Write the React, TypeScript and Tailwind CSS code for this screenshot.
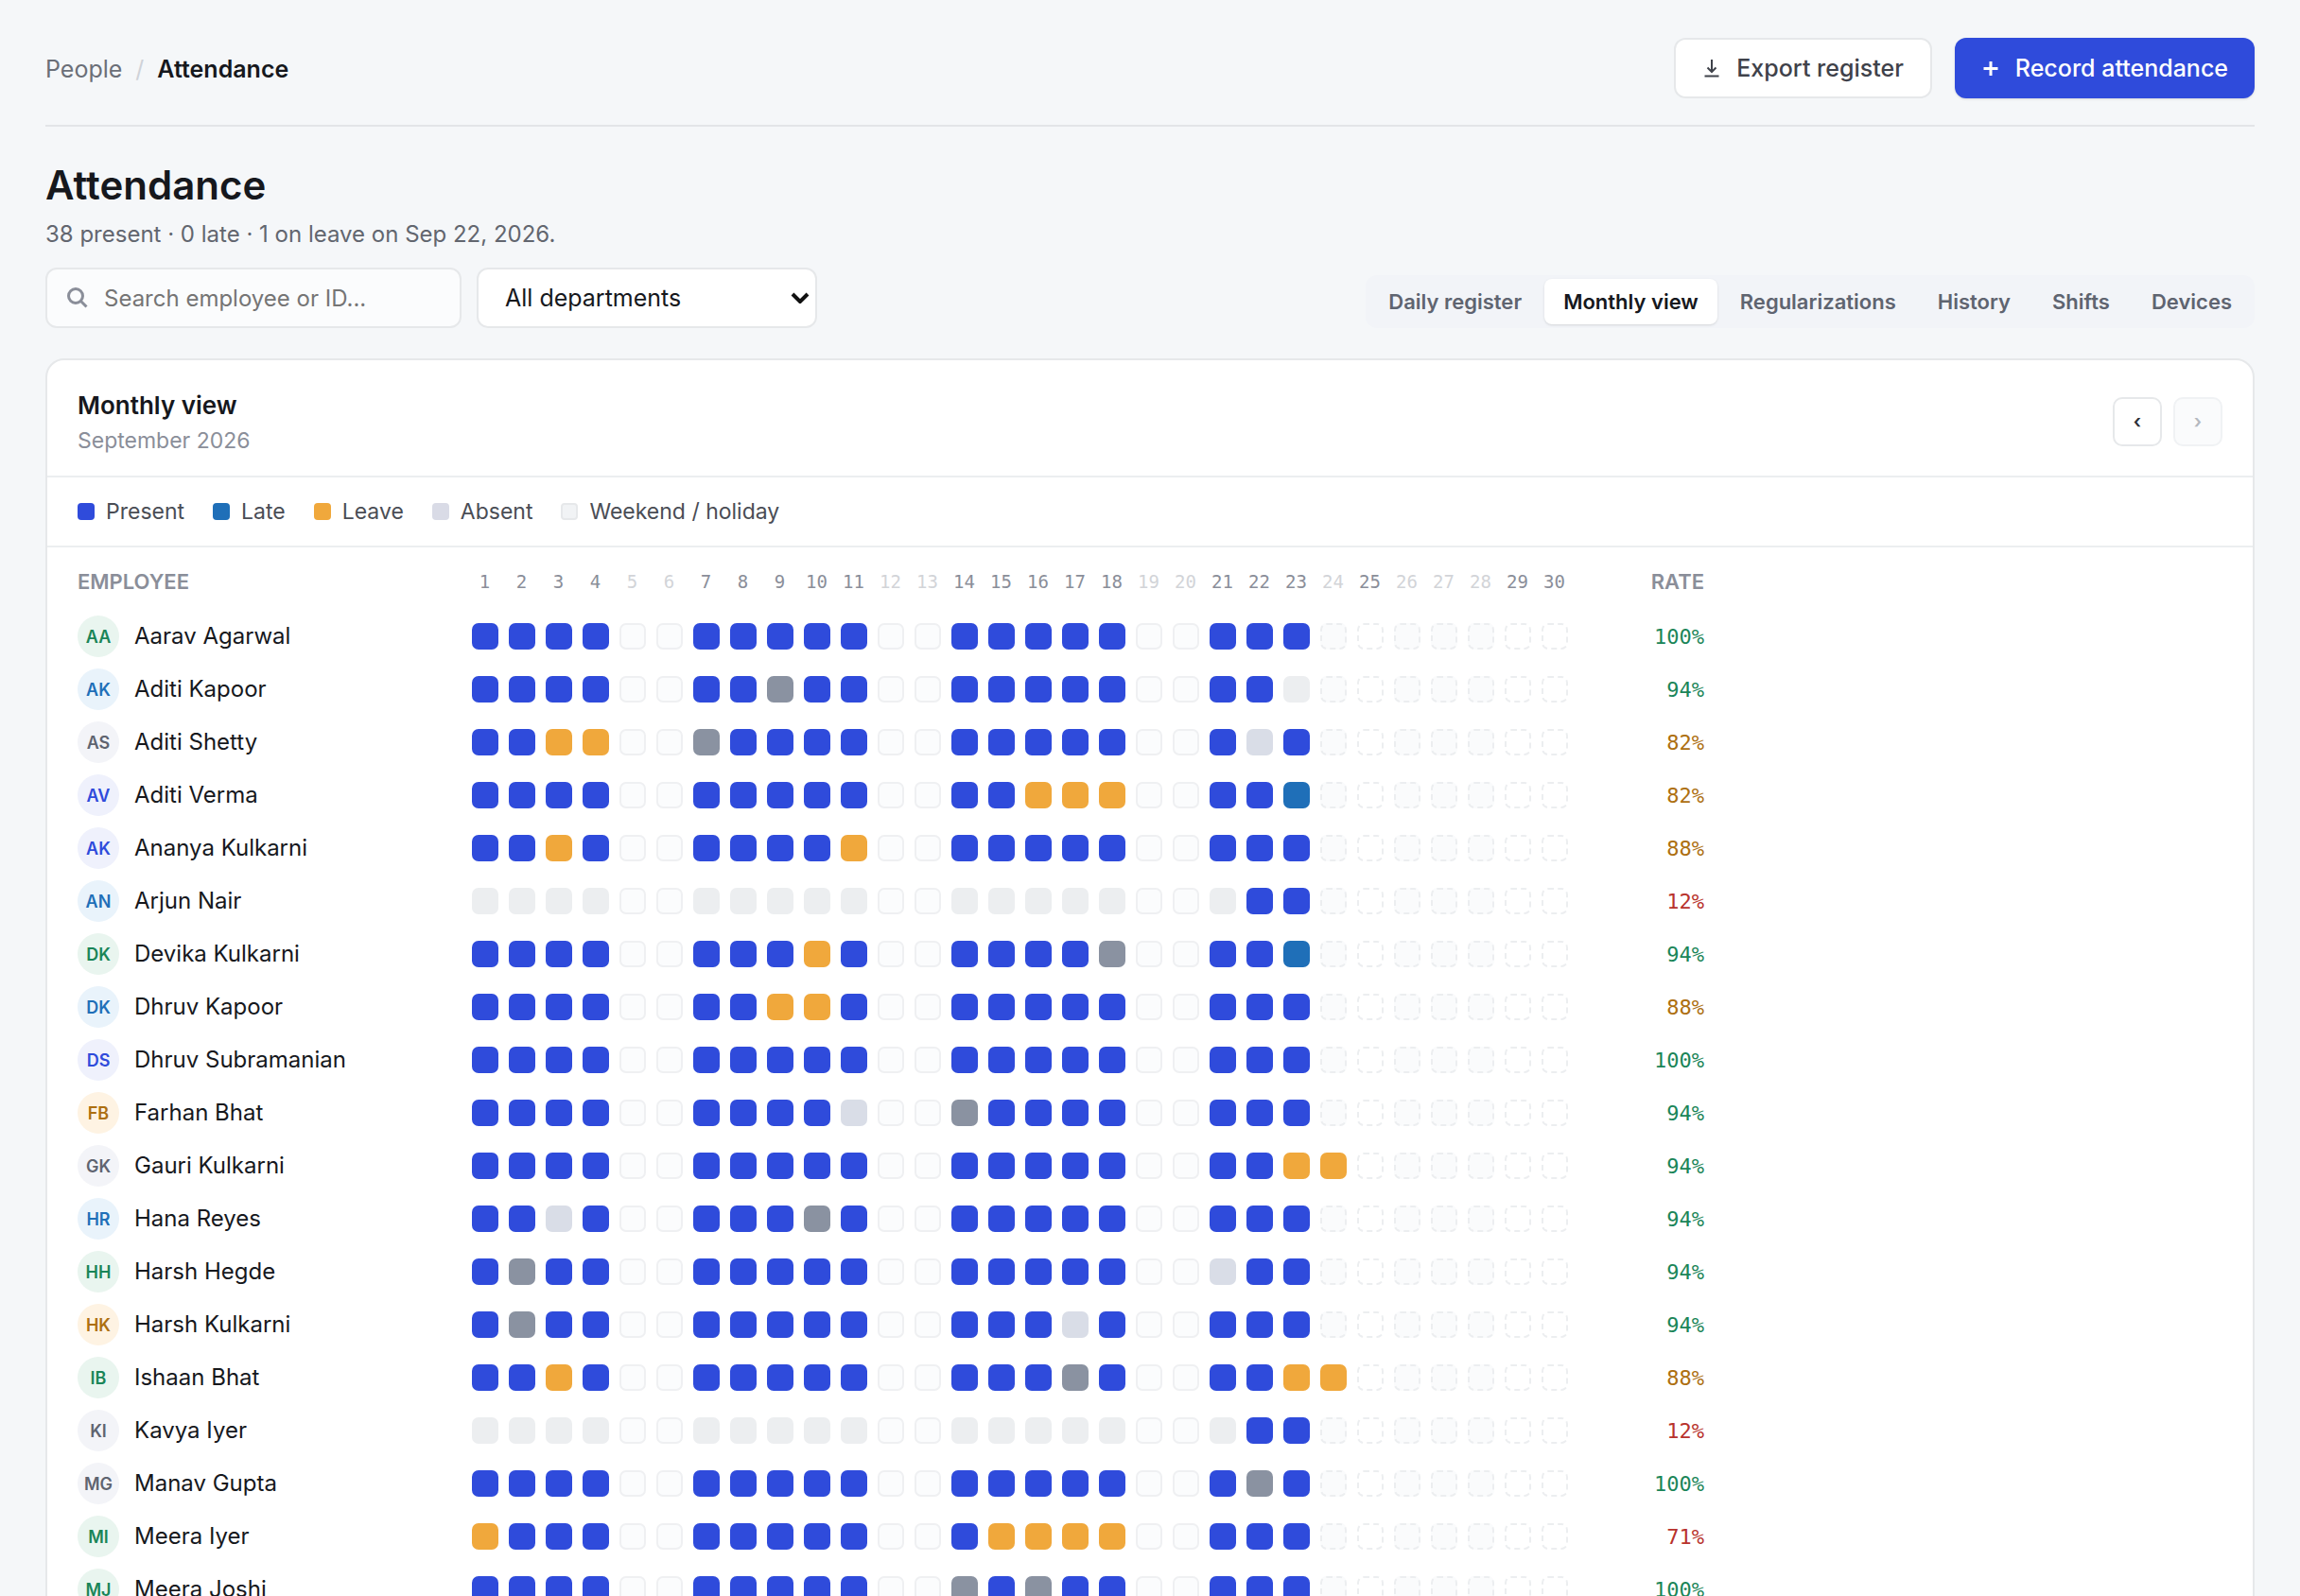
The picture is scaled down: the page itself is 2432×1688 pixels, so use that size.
// Attendance: monthly register for a single month, one row per employee
// and one square per day. Everything is drawn from the EMPLOYEES list below.

import type { ReactNode } from 'react';

type Status = 'present' | 'late' | 'leave' | 'absent' | 'unmarked' | 'none';
type Tone = 'green' | 'sky' | 'indigo' | 'amber' | 'gray';

interface Employee {
  name: string;
  tone: Tone;
  rate: number;
  /** First working day that counts; earlier working days are left blank. */
  from?: number;
  /** Days that differ from the default of "present". */
  days?: Record<number, Status>;
}

const TODAY = 23;
const DAYS = Array.from({ length: 30 }, (_, i) => i + 1);
const OFF_DAYS = [5, 6, 12, 13, 19, 20, 24, 26, 27, 28];

const STATUS_CLASS: Record<Status, string> = {
  present: 'bg-[#2f4bdb]',
  late: 'bg-[#1f6fb8]',
  leave: 'bg-[#f0a83c]',
  absent: 'bg-[#d9dde7]',
  unmarked: 'bg-[#8a92a1]',
  none: 'bg-[#eceef0]',
};

const TONE_CLASS: Record<Tone, string> = {
  green: 'bg-[#e9f5ef] text-[#1a8558]',
  sky: 'bg-[#e9f3fb] text-[#1f6fb8]',
  indigo: 'bg-[#eff1fc] text-[#2f4bdb]',
  amber: 'bg-[#fef3e3] text-[#ad6f10]',
  gray: 'bg-[#f3f4f8] text-[#5f6470]',
};

const EMPLOYEES: Employee[] = [
  { name: 'Aarav Agarwal', tone: 'green', rate: 100 },
  { name: 'Aditi Kapoor', tone: 'sky', rate: 94, days: { 9: 'unmarked', 23: 'none' } },
  { name: 'Aditi Shetty', tone: 'gray', rate: 82, days: { 3: 'leave', 4: 'leave', 7: 'unmarked', 22: 'absent' } },
  { name: 'Aditi Verma', tone: 'indigo', rate: 82, days: { 16: 'leave', 17: 'leave', 18: 'leave', 23: 'late' } },
  { name: 'Ananya Kulkarni', tone: 'indigo', rate: 88, days: { 3: 'leave', 11: 'leave' } },
  { name: 'Arjun Nair', tone: 'sky', rate: 12, from: 22 },
  { name: 'Devika Kulkarni', tone: 'green', rate: 94, days: { 10: 'leave', 18: 'unmarked', 23: 'late' } },
  { name: 'Dhruv Kapoor', tone: 'sky', rate: 88, days: { 9: 'leave', 10: 'leave' } },
  { name: 'Dhruv Subramanian', tone: 'indigo', rate: 100 },
  { name: 'Farhan Bhat', tone: 'amber', rate: 94, days: { 11: 'absent', 14: 'unmarked' } },
  { name: 'Gauri Kulkarni', tone: 'gray', rate: 94, days: { 23: 'leave', 24: 'leave' } },
  { name: 'Hana Reyes', tone: 'sky', rate: 94, days: { 3: 'absent', 10: 'unmarked' } },
  { name: 'Harsh Hegde', tone: 'green', rate: 94, days: { 2: 'unmarked', 21: 'absent' } },
  { name: 'Harsh Kulkarni', tone: 'amber', rate: 94, days: { 2: 'unmarked', 17: 'absent' } },
  { name: 'Ishaan Bhat', tone: 'green', rate: 88, days: { 3: 'leave', 17: 'unmarked', 23: 'leave', 24: 'leave' } },
  { name: 'Kavya Iyer', tone: 'gray', rate: 12, from: 22 },
  { name: 'Manav Gupta', tone: 'gray', rate: 100, days: { 22: 'unmarked' } },
  { name: 'Meera Iyer', tone: 'green', rate: 71, days: { 1: 'leave', 15: 'leave', 16: 'leave', 17: 'leave', 18: 'leave' } },
  { name: 'Meera Joshi', tone: 'green', rate: 100, days: { 14: 'unmarked', 16: 'unmarked' } },
];

const LEGEND = [
  { label: 'Present', swatch: 'bg-[#2f4bdb]' },
  { label: 'Late', swatch: 'bg-[#1f6fb8]' },
  { label: 'Leave', swatch: 'bg-[#f0a83c]' },
  { label: 'Absent', swatch: 'bg-[#d9dbe6]' },
  { label: 'Weekend / holiday', swatch: 'border-2 border-[#e6e8ea] bg-[#f1f3f5]' },
];

const TABS = ['Daily register', 'Monthly view', 'Regularizations', 'History', 'Shifts', 'Devices'];

function cellClass(employee: Employee, day: number): string {
  const marked = employee.days?.[day];
  if (marked) return STATUS_CLASS[marked];
  const off = OFF_DAYS.includes(day);
  if (day > TODAY) {
    return off
      ? 'border-2 border-dashed border-[#eceef0] bg-[#fafbfc]'
      : 'border-2 border-dashed border-[#eceef0]';
  }
  if (off) return 'border-2 border-[#eff0f2] bg-[#fbfcfd]';
  if (employee.from && day < employee.from) return STATUS_CLASS.none;
  return STATUS_CLASS.present;
}

function rateClass(rate: number): string {
  if (rate >= 90) return 'text-[#1a8558]';
  if (rate >= 80) return 'text-[#ad6f10]';
  return 'text-[#b8322c]';
}

function initials(name: string): string {
  return name
    .split(' ')
    .map((part) => part[0])
    .join('');
}

function NavButton({ label, disabled, children }: { label: string; disabled?: boolean; children: ReactNode }) {
  return (
    <button
      type="button"
      aria-label={label}
      disabled={disabled}
      className="flex size-[52px] items-center justify-center rounded-[10px] border-2 border-[#e6e8ea] bg-white text-[20px] font-semibold text-[#2c2f36] disabled:border-[#f0f2f4] disabled:bg-[#fafbfc] disabled:text-[#b4b8bf]"
    >
      {children}
    </button>
  );
}

function TopBar() {
  return (
    <header className="flex items-center justify-between border-b-2 border-[#e3e5e8] pt-10 pb-7">
      <nav aria-label="Breadcrumb" className="flex items-center gap-3.5 pt-0.5 text-[25px] leading-8">
        <a href="#people" className="text-[#6b6f78]">
          People
        </a>
        <span className="text-[#cfd2d8]">/</span>
        <span aria-current="page" className="font-semibold text-[#16181d]">
          Attendance
        </span>
      </nav>
      <div className="flex gap-6">
        <button
          type="button"
          className="flex h-16 items-center gap-4 rounded-xl border-2 border-[#e6e8ea] bg-white px-7 pt-0.5 text-[25px] font-medium text-[#3f424a]"
        >
          <svg viewBox="0 0 20 20" className="size-5" fill="none" stroke="currentColor" strokeWidth="2">
            <path d="M10 0v12.500M5.500 8.500 10 13l4.500-4.500M2.500 17.500h15" />
          </svg>
          Export register
        </button>
        <button
          type="button"
          className="flex h-16 items-center gap-4 rounded-xl bg-[#2f4bdb] px-7 pt-0.5 text-[25px] font-medium text-white shadow-sm"
        >
          <svg viewBox="0 0 20 20" className="size-5" fill="none" stroke="currentColor" strokeWidth="3">
            <path d="M10 2v15M2.500 9.500h15" />
          </svg>
          Record attendance
        </button>
      </div>
    </header>
  );
}

function Toolbar() {
  return (
    <div className="flex items-end justify-between">
      <div className="flex gap-4">
        <label className="flex h-16 w-[440px] items-center gap-4 rounded-xl border-2 border-[#e6e8ea] bg-[#fbfcfd] px-5">
          <svg viewBox="0 0 24 24" className="size-6" fill="none" stroke="#8a8e99" strokeWidth="3">
            <circle cx="10" cy="10" r="7.500" />
            <path d="m15.500 15.500 6 6" />
          </svg>
          <input
            type="search"
            aria-label="Search employees"
            placeholder="Search employee or ID..."
            className="min-w-0 flex-1 bg-transparent pt-0.5 text-[24px] outline-none placeholder:text-[#757575]"
          />
        </label>
        <div className="relative">
          <select
            aria-label="Department"
            className="h-16 w-[360px] appearance-none rounded-xl border-2 border-[#e6e8ea] bg-white px-7 pt-0.5 text-[25px] text-[#16181d]"
          >
            <option>All departments</option>
          </select>
          <svg
            viewBox="0 0 20 12"
            className="pointer-events-none absolute top-[26px] right-2 h-3 w-5"
            fill="none"
            stroke="#111"
            strokeWidth="4"
          >
            <path d="m2 2 8 8 8-8" />
          </svg>
        </div>
      </div>
      <div role="tablist" className="flex gap-1 rounded-xl bg-[#f2f4f8] p-1">
        {TABS.map((tab) => (
          <button
            key={tab}
            type="button"
            role="tab"
            aria-selected={tab === 'Monthly view'}
            className="h-12 rounded-lg px-5 text-[22px] font-semibold text-[#5f6470] aria-selected:bg-white aria-selected:text-[#16181d] aria-selected:shadow-sm"
          >
            {tab}
          </button>
        ))}
      </div>
    </div>
  );
}

function RegisterTable() {
  return (
    <table className="table-fixed border-collapse">
      <colgroup>
        <col className="w-[411px]" />
        {DAYS.map((day) => (
          <col key={day} className="w-[39px]" />
        ))}
        <col className="w-[139px]" />
      </colgroup>
      <thead>
        <tr className="h-[66px]">
          <th scope="col" className="pt-1.5 text-left text-[22px] font-semibold text-[#8a8e99]">
            EMPLOYEE
          </th>
          {DAYS.map((day) => (
            <th
              key={day}
              scope="col"
              className={`pt-1.5 text-center font-['DejaVu_Sans_Mono','Liberation_Mono',monospace] text-[19px] font-normal ${
                OFF_DAYS.includes(day) ? 'text-[#d2d4d8]' : 'text-[#8a8e99]'
              }`}
            >
              {day}
            </th>
          ))}
          <th scope="col" className="pt-1.5 text-right text-[22px] font-semibold text-[#8a8e99]">
            RATE
          </th>
        </tr>
      </thead>
      <tbody>
        {EMPLOYEES.map((employee) => (
          <tr key={employee.name} className="h-14">
            <th scope="row" className="text-left font-medium">
              <span className="flex items-center gap-4">
                <span
                  className={`flex size-11 items-center justify-center rounded-full text-[18px] font-semibold ${TONE_CLASS[employee.tone]}`}
                >
                  {initials(employee.name)}
                </span>
                <span className="text-[24px] font-normal text-[#16181d]">{employee.name}</span>
              </span>
            </th>
            {DAYS.map((day) => (
              <td key={day}>
                <span className={`mx-auto block size-7 rounded-[7px] ${cellClass(employee, day)}`} />
              </td>
            ))}
            <td
              className={`text-right font-['DejaVu_Sans_Mono','Liberation_Mono',monospace] text-[22px] ${rateClass(employee.rate)}`}
            >
              {employee.rate}%
            </td>
          </tr>
        ))}
      </tbody>
    </table>
  );
}

export default function App() {
  return (
    <div className="h-screen overflow-y-auto bg-[#f5f7f9] px-12 font-['Inter','Liberation_Sans',sans-serif] text-[#16181d] [scrollbar-width:none]">
      <TopBar />
      <main className="pt-9 pb-12">
        <h1 className="text-[42px] leading-[52px] font-semibold">Attendance</h1>
        <p className="mt-2 mb-[17px] text-[24px] leading-9 text-[#62666f]">
          38 present · 0 late · 1 on leave on Sep 22, 2026.
        </p>
        <Toolbar />
        <section className="mt-8 rounded-[20px] border-2 border-[#e6e8ea] bg-white">
          <div className="flex items-center justify-between border-b-2 border-[#eceef0] px-8 pt-7 pb-5">
            <div>
              <h2 className="text-[26px] leading-10 font-semibold">Monthly view</h2>
              <p className="text-[23px] leading-[34px] text-[#8a8e99]">September 2026</p>
            </div>
            <div className="flex gap-3">
              <NavButton label="Previous month">‹</NavButton>
              <NavButton label="Next month" disabled>
                ›
              </NavButton>
            </div>
          </div>
          <ul className="flex h-[74px] items-center gap-[30px] border-b-2 border-[#eceef0] px-8 text-[23px] text-[#4a4d55]">
            {LEGEND.map(({ label, swatch }) => (
              <li key={label} className="flex items-center gap-3">
                <span className={`size-[18px] rounded-[4px] ${swatch}`} />
                {label}
              </li>
            ))}
          </ul>
          <div className="px-8 pb-6">
            <RegisterTable />
          </div>
        </section>
      </main>
    </div>
  );
}
